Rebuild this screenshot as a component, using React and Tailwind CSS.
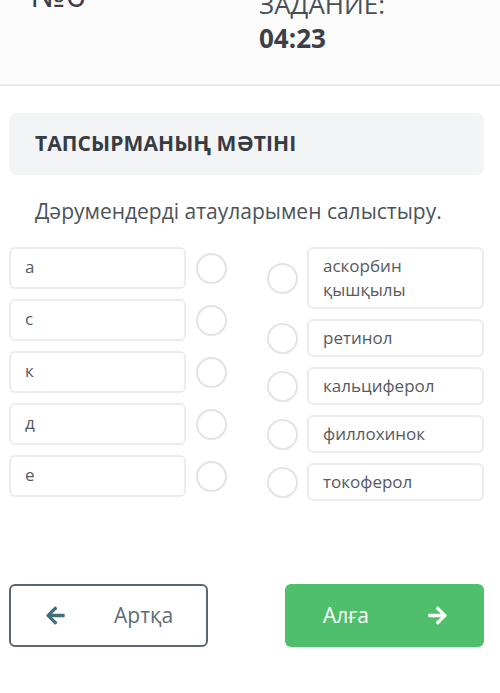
import React from 'react';
import { FaArrowLeft, FaArrowRight } from 'react-icons/fa';

const leftItems = ['а', 'с', 'к', 'д', 'е'];
const rightItems = ['аскорбин қышқылы', 'ретинол', 'кальциферол', 'филлохинок', 'токоферол'];

function Circle() {
  return <div className="w-[31px] h-[31px] shrink-0 rounded-full border-[2.5px] border-[#e3e3e3] bg-white" />;
}

export default function App() {
  return (
    <div className="w-[500px] h-[693px] overflow-hidden bg-white text-[#3b4048]" style={{ fontFamily: '"Open Sans", "Noto Sans", sans-serif' }}>
      {/* верхняя панель */}
      <div className="h-[86px] bg-[#fcfcfc] border-b-2 border-[#ebebeb] flex">
        <div className="pl-[30px] w-[259px] -mt-[26px] text-[35px] leading-[40px] text-[#3b4048]">№6</div>
        <div className="-mt-[13px] text-[26px] leading-[34px]">
          <div className="text-[#4a4f57]">ЗАДАНИЕ:</div>
          <div className="font-bold text-[#3b4048]">04:23</div>
        </div>
      </div>

      <div className="pl-[9px] pr-[16px] pt-[27px]">
        <div className="h-[62px] rounded-[8px] bg-[#f3f4f6] flex items-center pl-[26px]">
          <span className="text-[21px] font-bold text-[#363b44] tracking-[0.1px]">ТАПСЫРМАНЫҢ МӘТІНІ</span>
        </div>

        <p className="mt-[20px] pl-[26px] text-[21px] leading-[32px] text-[#4d525a]">Дәрумендерді атауларымен салыстыру.</p>

        {/* сәйкестендіру */}
        <div className="mt-[20px] flex">
          <div className="flex flex-col gap-[10px]">
            {leftItems.map((t) => (
              <div key={t} className="flex items-center">
                <div className="w-[177px] h-[42px] rounded-[6px] border-2 border-[#ececec] bg-white pl-[14px] pt-[7px] text-[17px] leading-[22px] text-[#555a61]">
                  {t}
                </div>
                <div className="ml-[10px]"><Circle /></div>
              </div>
            ))}
          </div>
          <div className="ml-auto flex flex-col gap-[10px]">
            {rightItems.map((t) => (
              <div key={t} className="flex items-center">
                <Circle />
                <div className="ml-[9px] w-[177px] rounded-[6px] border-2 border-[#ececec] bg-white pl-[14px] pr-[10px] py-[5px] text-[17px] leading-[24px] text-[#555a61]">
                  {t}
                </div>
              </div>
            ))}
          </div>
        </div>

        {/* навигация */}
        <div className="mt-[83px] flex justify-between">
          <button className="w-[199px] h-[63px] rounded-[6px] border-2 border-[#5b6770] bg-white flex items-center pl-[34px] gap-[48px]">
            <FaArrowLeft className="w-[21px] h-[21px] text-[#3f6e7c]" />
            <span className="text-[21px] text-[#5d6d76]">Артқа</span>
          </button>
          <button className="w-[199px] h-[63px] rounded-[6px] bg-[#50bf6b] flex items-center pl-[38px] gap-[58px]">
            <span className="text-[21px] text-white">Алға</span>
            <FaArrowRight className="w-[21px] h-[21px] text-white" />
          </button>
        </div>
      </div>
    </div>
  );
}
